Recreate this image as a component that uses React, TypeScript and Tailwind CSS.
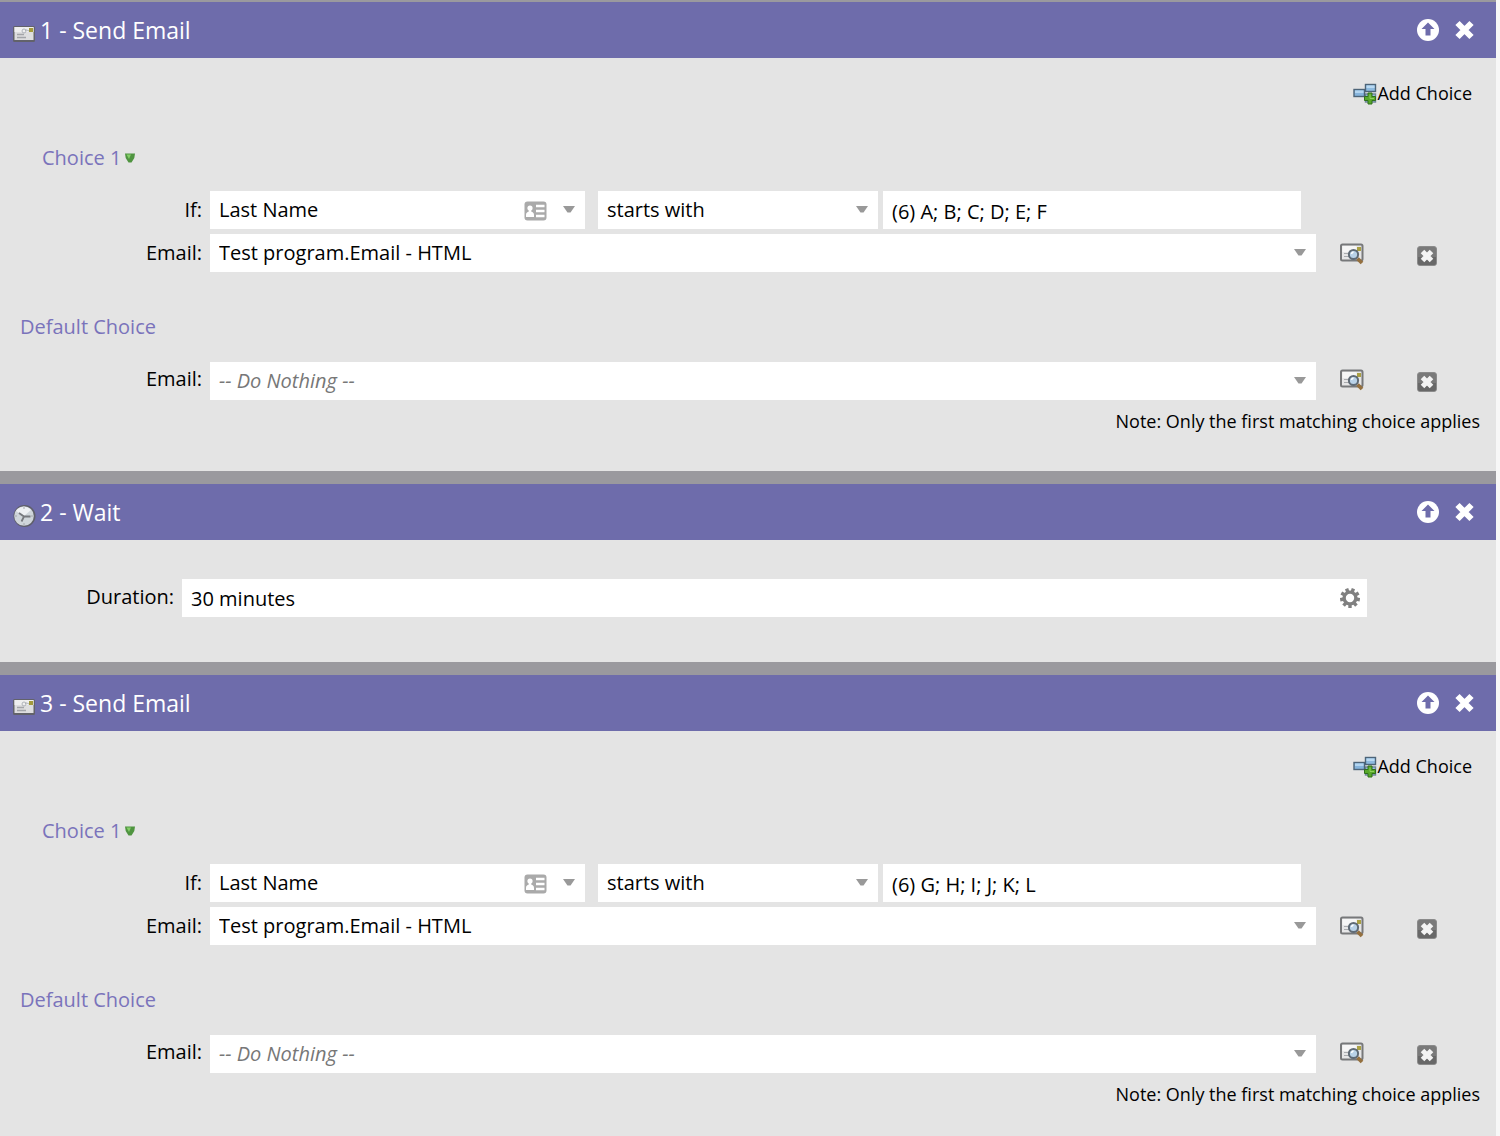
import React, { useId, useState } from "react";

function Envelope() {
  return (
    <svg width="24" height="18" viewBox="0 0 24 18" aria-hidden="true">
      <rect x="1" y="1" width="22" height="16" rx="1.5" fill="#62626a" />
      <rect x="2.5" y="2" width="19" height="13" fill="#dededf" />
      <path d="M2.500 2h19v5h-19z" fill="#efefef" />
      <circle cx="12" cy="6" r="2" fill="none" stroke="#b0b4ba" />
      <path d="M13 5.500c2-1.500 3 1 4.500 0" stroke="#a9adb2" fill="none" />
      <rect x="17" y="3" width="4" height="4" fill="#a39a3c" />
      <path d="M5 9.500h7M5 12.500h9" stroke="#a3a5a9" strokeWidth="1.300" />
    </svg>
  );
}

function Clock() {
  return (
    <svg width="24" height="24" viewBox="0 0 24 24" aria-hidden="true">
      <circle cx="12.500" cy="12" r="11" fill="#5f5f6a" />
      <circle cx="12" cy="12" r="9.800" fill="#cfd5da" />
      <path d="M4 7a9.500 9.500 0 0 1 15-1L12 12Z" fill="#eef0f3" />
      <path d="M7 9l5 3.500h6.500M12 12.500l-2.500 5" stroke="#77797e" strokeWidth="1.800" fill="none" />
      <path d="M12 3v2M12 19v2M3 12h2M19 12h2" stroke="#a5a8ac" />
    </svg>
  );
}

function UpCircle() {
  return (
    <svg width="22" height="22" viewBox="0 0 22 22" aria-hidden="true">
      <circle cx="11" cy="11" r="11" fill="#fff" />
      <path d="M11 3.500l6.500 6.500h-4v6.500h-5V10h-4z" fill="#6e6cab" />
    </svg>
  );
}

function Cross() {
  return (
    <svg width="22" height="22" viewBox="0 0 22 22" aria-hidden="true">
      <path d="M3.500 4l14 14M17.500 4l-14 14" stroke="#fff" strokeWidth="6" />
    </svg>
  );
}

function AddBoxes() {
  return (
    <svg width="24" height="22" viewBox="0 0 24 22" aria-hidden="true">
      <rect x="12.500" y="1.500" width="10" height="7" fill="#8ebbe0" stroke="#4d6478" strokeWidth="1.400" />
      <rect x="13.500" y="2.500" width="8" height="2.500" fill="#b9d9f2" />
      <rect x="12.500" y="11" width="10" height="8" fill="#9cc4e6" stroke="#6d8498" strokeWidth="1.400" />
      <rect x="1" y="6.500" width="10.500" height="7" fill="#86b4dc" stroke="#4d6478" strokeWidth="1.400" />
      <rect x="2" y="7.500" width="8.500" height="2.500" fill="#b3d5f0" />
      <path d="M15 10h4v3.500h3.500v4H19V21h-4v-3.500h-3.500v-4H15z" fill="#58a82b" stroke="#2f701a" />
      <path d="M17 11.500v4h4" stroke="#8fd05c" fill="none" />
    </svg>
  );
}

function GreenMarker() {
  return (
    <svg width="10" height="10" viewBox="0 0 10 10" aria-hidden="true">
      <path d="M0 .5h10L9.300 5 6.500 9.500h-3L.7 5z" fill="#4f9440" />
      <path d="M1.500 1.500H6L4 6z" fill="#84cf68" />
    </svg>
  );
}

function Caret() {
  return (
    <svg width="12" height="7" viewBox="0 0 12 7" aria-hidden="true">
      <path d="M0 0h12L7.500 6.500h-3z" fill="#999" />
    </svg>
  );
}

function IdCard() {
  return (
    <svg width="23" height="20" viewBox="0 0 23 20" aria-hidden="true">
      <rect x="0.500" y="0.500" width="22" height="19" rx="3" fill="#aaa" />
      <circle cx="6" cy="7" r="2.600" fill="#fff" />
      <path d="M4.800 8h2.400v2.500c1.600.7 2.800 1.300 2.800 3.500v2H2v-2c0-2.200 1.200-2.800 2.800-3.500z" fill="#fff" />
      <path d="M12 5h8.500M12 10h8.500M12 15h8.500" stroke="#fff" strokeWidth="2.400" />
    </svg>
  );
}

function PreviewIcon() {
  return (
    <svg width="24" height="22" viewBox="0 0 24 22" aria-hidden="true">
      <rect x="1" y="1.500" width="21.500" height="16" rx="1.500" fill="#e6e6e7" stroke="#77787a" strokeWidth="2" />
      <rect x="2.500" y="3" width="14" height="6" fill="#f6f6f6" />
      <rect x="17" y="4" width="4" height="4" fill="#aaa044" />
      <path d="M4 10.500h5M4 13.500h5" stroke="#a9abae" strokeWidth="1.200" />
      <path d="M17.500 15.500l4.500 4.500" stroke="#94703f" strokeWidth="3.800" />
      <circle cx="13.500" cy="11.500" r="4.600" fill="#b9d2e8" stroke="#5f6a75" strokeWidth="2" />
      <path d="M11.500 11a2.500 2.500 0 0 1 2-2" stroke="#fff" strokeWidth="1.400" fill="none" />
    </svg>
  );
}

function RemoveIcon() {
  return (
    <svg width="20" height="20" viewBox="0 0 20 20" aria-hidden="true">
      <rect x="0.500" y="0.500" width="19" height="19" rx="2.500" fill="#7a7a7a" stroke="#8b8b8b" />
      <path d="M1 11h18v6q0 2-2 2H3q-2 0-2-2z" fill="#686868" />
      <path d="M5.500 5.500l9 9M14.500 5.500l-9 9" stroke="#f4f4f4" strokeWidth="5" />
    </svg>
  );
}

function Gear() {
  return (
    <svg width="20" height="20" viewBox="0 0 20 20" aria-hidden="true">
      <circle cx="10" cy="10" r="5.900" fill="none" stroke="#808080" strokeWidth="3.400" />
      {[20, 60, 100, 140, 180, 220, 260, 300, 340].map((a) => (
        <rect key={a} x="8.300" y="0" width="3.400" height="4" fill="#808080" transform={`rotate(${a} 10 10)`} />
      ))}
    </svg>
  );
}

const FIELD = "h-[38px] w-full appearance-none rounded-none bg-white pl-[9px] text-[20px] leading-7 outline-none";

function Dropdown({ id, label, options, muted, card }: { id?: string; label?: string; options: string[]; muted?: boolean; card?: boolean }) {
  return (
    <div className="relative">
      <select
        id={id}
        aria-label={label}
        className={`${FIELD} pr-8 ${muted ? "italic text-[#777]" : "text-black"}`}
      >
        {options.map((o) => (
          <option key={o}>{o}</option>
        ))}
      </select>
      <span className="pointer-events-none absolute inset-y-0 right-[10px] flex items-center gap-4">
        {card && (
          <span className="pt-0.5">
            <IdCard />
          </span>
        )}
        <span className="pb-0.5">
          <Caret />
        </span>
      </span>
    </div>
  );
}

function Panel({ icon, title, children }: { icon: React.ReactNode; title: string; children: React.ReactNode }) {
  return (
    <section>
      <header className="flex h-14 items-center bg-[#6e6cab] pr-5 pl-3 text-white">
        <span className="mr-1 flex w-6 pt-2">{icon}</span>
        <h2 className="flex-1 text-[23px] leading-8">{title}</h2>
        <button aria-label="Move up" className="mr-[15px]">
          <UpCircle />
        </button>
        <button aria-label="Remove step">
          <Cross />
        </button>
      </header>
      {children}
    </section>
  );
}

function EmailRow({ options, muted }: { options: string[]; muted?: boolean }) {
  const id = useId();
  return (
    <div className="flex items-center">
      <label htmlFor={id} className={`w-[210px] shrink-0 pr-2 text-right ${muted ? "pb-1" : ""}`}>
        Email:
      </label>
      <div className="flex-1">
        <Dropdown id={id} options={options} muted={muted} />
      </div>
      <div className={`flex w-[180px] shrink-0 items-center pl-6 ${muted ? "pb-0.5" : "pt-0.5"}`}>
        <button aria-label="Preview email">
          <PreviewIcon />
        </button>
        <button aria-label="Clear email" className="ml-[53px] pt-1">
          <RemoveIcon />
        </button>
      </div>
    </div>
  );
}

function SendEmail({ title, values }: { title: string; values: string }) {
  const id = useId();
  const [text, setText] = useState(values);
  return (
    <Panel icon={<Envelope />} title={title}>
      <div className="pt-[21px] pb-9">
        <div className="flex justify-end pr-6">
          <button className="flex items-center text-[18px] leading-7">
            <span className="pt-px">
              <AddBoxes />
            </span>
            Add Choice
          </button>
        </div>
        <h3 className="mt-[37px] flex items-center gap-1 pl-[42px] text-[#7a73bb]">
          Choice 1 <GreenMarker />
        </h3>
        <div className="mt-[19px] flex items-center pr-[195px]">
          <label htmlFor={id} className="w-[210px] shrink-0 pr-2 text-right">
            If:
          </label>
          <div className="mr-[13px] flex-[375]">
            <Dropdown id={id} options={["Last Name", "First Name"]} card />
          </div>
          <div className="mr-[5px] flex-[280]">
            <Dropdown label="Operator" options={["starts with", "is", "contains"]} />
          </div>
          <div className="flex-[418]">
            <input aria-label="Values" value={text} onChange={(e) => setText(e.target.value)} className={`${FIELD} pt-0.5`} />
          </div>
        </div>
        <div className="mt-[5px]">
          <EmailRow options={["Test program.Email - HTML", "-- Do Nothing --"]} />
        </div>
        <h3 className="mt-[41px] pl-5 text-[#7a73bb]">Default Choice</h3>
        <div className="mt-[21px]">
          <EmailRow options={["-- Do Nothing --", "Test program.Email - HTML"]} muted />
        </div>
        <p className="mt-[7px] pr-4 text-right text-[18px] leading-7">Note: Only the first matching choice applies</p>
      </div>
    </Panel>
  );
}

function Wait() {
  const id = useId();
  const [text, setText] = useState("30 minutes");
  return (
    <Panel icon={<Clock />} title="2 - Wait">
      <div className="flex items-center pt-[39px] pr-[129px] pb-[45px]">
        <label htmlFor={id} className="w-[182px] shrink-0 pr-2 pb-0.5 text-right">
          Duration:
        </label>
        <div className="relative flex-1">
          <input id={id} value={text} onChange={(e) => setText(e.target.value)} className={`${FIELD} pr-10`} />
          <button aria-label="Duration settings" className="absolute inset-y-0 right-[7px] flex items-center">
            <Gear />
          </button>
        </div>
      </div>
    </Panel>
  );
}

export default function App() {
  return (
    <main className="min-h-screen border-r-4 border-[#f7f7f7] bg-[#e4e4e4] pt-0.5 font-['Open_Sans',sans-serif] text-[20px] leading-7 text-black shadow-[inset_0_2px_0_#9a999e]">
      <SendEmail title="1 - Send Email" values="(6) A; B; C; D; E; F" />
      <div className="h-[13px] bg-[#9a999e]" />
      <Wait />
      <div className="h-[13px] bg-[#9a999e]" />
      <SendEmail title="3 - Send Email" values="(6) G; H; I; J; K; L" />
    </main>
  );
}
